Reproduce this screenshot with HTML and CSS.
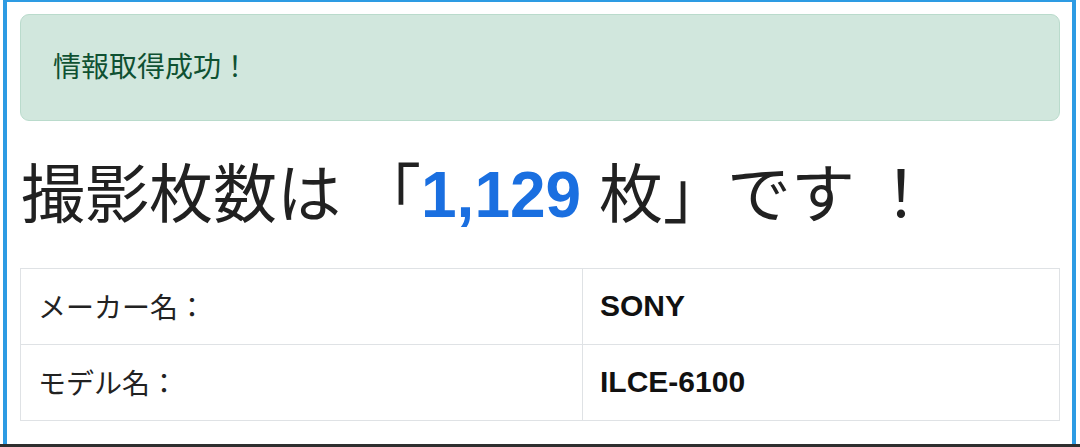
FILE: index.html
```html
<!DOCTYPE html>
<html lang="ja">
<head>
<meta charset="utf-8">
<link rel="stylesheet" href="styles.css">
</head>
<body>
<div class="page">
  <div class="frame">
    <div class="alert">情報取得成功！</div>
    <h1 class="headline">撮影枚数は<span class="open">「</span><span class="count">1,129</span> 枚」です<span class="bang">！</span></h1>
    <table class="info">
      <tr><td class="label">メーカー名：</td><td class="value">SONY</td></tr>
      <tr><td class="label">モデル名：</td><td class="value">ILCE-6100</td></tr>
    </table>
  </div>
  <div class="bottom-bar"></div>
</div>
</body>
</html>
```
FILE: styles.css
```css
html, body {
  margin: 0;
  padding: 0;
  background: #ffffff;
}
body {
  width: 1080px;
  height: 447px;
  overflow: hidden;
  font-family: "Liberation Sans", "Noto Sans CJK JP", sans-serif;
  color: #212529;
}
.page {
  display: flex;
  flex-direction: column;
  height: 447px;
}
.frame {
  margin-left: 3px;
  width: 1073px;
  flex: 1;
  box-sizing: border-box;
  border-top: 2px solid #2d9be3;
  border-left: 4px solid #2d9be3;
  border-right: 4px solid #2d9be3;
  padding: 12px 12px 0 13px;
  display: flex;
  flex-direction: column;
}
.bottom-bar {
  height: 3px;
  background: #2e2e2e;
}
.alert {
  height: 107px;
  box-sizing: border-box;
  border: 1px solid #badbcc;
  background: #d1e7dd;
  border-radius: 9px;
  color: #0f5132;
  font-size: 28px;
  display: flex;
  align-items: center;
  padding-left: 32px;
  padding-bottom: 5px;
}
.headline {
  margin: 14px 0 0 0;
  font-weight: normal;
  font-size: 64px;
  line-height: 120px;
  height: 120px;
  padding-left: 1px;
  color: #212121;
  white-space: nowrap;
}
.open {
  margin-left: 16px;
}
.bang {
  margin-left: 14px;
}
.count {
  color: #1a6fe0;
  font-weight: bold;
}
.info {
  margin-top: 13px;
  width: 1040px;
  border-collapse: collapse;
  font-size: 28px;
}
.info td {
  border: 1px solid #dfe2e5;
  height: 73px;
  padding: 0 0 2px 17px;
  vertical-align: middle;
}
.info .label {
  width: 544px;
  color: #222;
}
.info .value {
  font-weight: bold;
  font-size: 30px;
  color: #111;
}
```
